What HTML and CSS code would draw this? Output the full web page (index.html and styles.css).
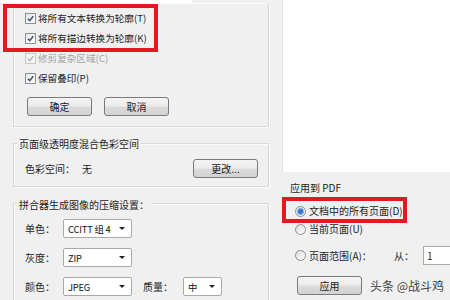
FILE: index.html
```html
<!DOCTYPE html>
<html lang="zh-CN">
<head>
<meta charset="utf-8">
<title>拼合器设置</title>
<link rel="stylesheet" href="styles.css">
</head>
<body>
<div class="screen">
  <div class="left">
    <div class="strip"></div>
    <div class="group g1">
      <div class="cb"><span class="box"><svg viewBox="0 0 10 10"><path d="M2.2 5.2 L4.2 7.4 L8 2.6"/></svg></span>将所有文本转换为轮廓(T)</div>
      <div class="cb"><span class="box"><svg viewBox="0 0 10 10"><path d="M2.2 5.2 L4.2 7.4 L8 2.6"/></svg></span>将所有描边转换为轮廓(K)</div>
      <div class="cb disabled"><span class="box"><svg viewBox="0 0 10 10"><path d="M2.2 5.2 L4.2 7.4 L8 2.6"/></svg></span>修剪复杂区域(C)</div>
      <div class="cb"><span class="box"><svg viewBox="0 0 10 10"><path d="M2.2 5.2 L4.2 7.4 L8 2.6"/></svg></span>保留叠印(P)</div>
      <div class="btns"><span class="btn">确定</span><span class="btn">取消</span></div>
    </div>
    <div class="group g2">
      <div class="gtitle">页面级透明度混合色彩空间</div>
      <div class="row cs">
        <span class="lbl">色彩空间：</span><span class="val">无</span><span class="btn change">更改...</span>
      </div>
    </div>
    <div class="group g3">
      <div class="gtitle">拼合器生成图像的压缩设置：</div>
      <div class="row sel-row"><span class="lbl">单色：</span><span class="select">CCITT 组 4</span></div>
      <div class="row sel-row"><span class="lbl">灰度：</span><span class="select">ZIP</span></div>
      <div class="row sel-row"><span class="lbl">颜色：</span><span class="select">JPEG</span><span class="lbl q">质量：</span><span class="select small">中</span></div>
    </div>
  </div>
  <div class="right">
    <div class="white"></div>
    <div class="apply">
      <div class="atitle">应用到 PDF</div>
      <div class="radio-row r1"><span class="radio on"></span>文档中的所有页面(D)</div>
      <div class="radio-row r2"><span class="radio"></span>当前页面(U)</div>
      <div class="radio-row r3"><span class="radio"></span><span class="range">页面范围(A)：</span><span class="from">从：</span><span class="input">1</span></div>
      <span class="btn applybtn">应用</span>
    </div>
  </div>
  <div class="redbox rb1"></div>
  <div class="redbox rb2"></div>
  <div class="watermark">头条 @战斗鸡</div>
</div>
</body>
</html>
```
FILE: styles.css
```css
html, body {
  margin: 0;
  padding: 0;
}
body {
  width: 450px;
  height: 300px;
  overflow: hidden;
  background: #f0f0f0;
  font-family: "Noto Sans CJK SC", "Noto Sans", sans-serif;
  font-size: 10px;
  line-height: 12px;
  color: #1e1e1e;
}
.screen {
  position: relative;
  width: 450px;
  height: 300px;
  display: flex;
  overflow: hidden;
}
.left {
  width: 282px;
  flex: none;
}
.strip {
  width: 192px;
  height: 3px;
  background: #fff;
}
.group {
  margin-left: 13px;
  width: 256px;
  box-sizing: border-box;
  border: 1px solid #d9d9d9;
  box-shadow: inset 1px 1px 0 #fbfbfb, 1px 1px 0 #fbfbfb;
  padding-left: 11px;
}
.g1 {
  border-top: none;
  padding-top: 5px;
  padding-bottom: 10px;
}
.cb {
  height: 20px;
  display: flex;
  align-items: center;
  font-size: 9.6px;
}
.box {
  width: 9px;
  height: 9px;
  border: 1px solid #8e8f8f;
  background: linear-gradient(135deg, #e6e6e6, #ffffff);
  margin-right: 2px;
  display: flex;
  flex: none;
}
.box svg {
  width: 9px;
  height: 9px;
}
.box path {
  fill: none;
  stroke: #3b4f77;
  stroke-width: 1.7;
}
.cb.disabled {
  color: #a3a3a3;
}
.cb.disabled .box {
  border-color: #c6c6c6;
  background: #f4f4f4;
}
.cb.disabled .box path {
  stroke: #b5b5b5;
}
.btns {
  display: flex;
  gap: 12px;
  margin-top: 9px;
  margin-left: 2px;
}
.btn {
  width: 65px;
  height: 19px;
  box-sizing: border-box;
  border: 1px solid #7a7a7a;
  border-radius: 3px;
  background: linear-gradient(#f4f4f4 0%, #ececec 48%, #dcdcdc 52%, #d2d2d2 100%);
  display: flex;
  align-items: center;
  justify-content: center;
  color: #222;
  flex: none;
}
.g2 {
  margin-top: 16px;
  padding-bottom: 8px;
}
.gtitle {
  display: block;
  width: max-content;
  margin-top: -7px;
  margin-left: -8px;
  padding: 0 2px;
  background: #f0f0f0;
  line-height: 14px;
  height: 14px;
}
.row {
  display: flex;
  align-items: center;
  height: 19px;
}
.cs {
  margin-top: 8px;
}
.cs .lbl {
  width: 57px;
}
.cs .val {
  width: 111px;
}
.g3 {
  margin-top: 16px;
  border-bottom: none;
  padding-bottom: 20px;
}
.g3 .gtitle {
  margin-top: -6px;
}
.sel-row {
  margin-top: 10px;
}
.g3 .gtitle + .sel-row {
  margin-top: 7px;
}
.sel-row .lbl {
  width: 38px;
}
.select {
  position: relative;
  width: 69px;
  height: 19px;
  box-sizing: border-box;
  border: 1px solid #a9a9a9;
  border-radius: 2px;
  background: #fff;
  display: flex;
  align-items: center;
  padding-left: 4px;
  color: #111;
  flex: none;
  font-size: 9.4px;
  letter-spacing: -0.2px;
  white-space: nowrap;
}
.select::after {
  content: "";
  position: absolute;
  right: 6px;
  top: 7px;
  border-left: 3px solid transparent;
  border-right: 3px solid transparent;
  border-top: 3px solid #222;
}
.select.small {
  width: 39px;
}
.lbl.q {
  margin-left: 11px;
  width: 40px;
}
.right {
  width: 168px;
  flex: none;
  display: flex;
  flex-direction: column;
}
.white {
  height: 172px;
  background: #fff;
  box-shadow: inset 1px 0 0 #e4e4e4;
}
.apply {
  padding-left: 8px;
}
.atitle {
  margin-top: 9px;
  line-height: 14px;
  height: 14px;
}
.radio-row {
  display: flex;
  align-items: center;
  height: 18px;
  margin-left: 5px;
}
.r1 {
  margin-top: 7px;
}
.r3 {
  margin-top: 8px;
  height: 19px;
}
.radio {
  width: 9px;
  height: 9px;
  border: 1px solid #8e8f8f;
  border-radius: 50%;
  background: linear-gradient(135deg, #dcdcdc, #ffffff);
  margin-right: 3px;
  flex: none;
}
.radio.on {
  background: radial-gradient(circle, #2f67b8 0, #4d86d4 2.5px, #b9d3f0 3.6px, #f2f2f2 4.2px);
}
.range {
  width: 85px;
  flex: none;
}
.from {
  width: 29px;
  flex: none;
}
.input {
  width: 40px;
  height: 19px;
  box-sizing: border-box;
  border: 1px solid #a9a9a9;
  background: #fff;
  padding-left: 3px;
  display: flex;
  align-items: center;
  flex: none;
}
.applybtn {
  margin-top: 11px;
  margin-left: 7px;
}
.redbox {
  position: absolute;
  border: 4px solid #e2191f;
  box-sizing: border-box;
}
.rb1 {
  left: 3px;
  top: 4px;
  width: 155px;
  height: 48px;
}
.rb2 {
  left: 282px;
  top: 197px;
  width: 125px;
  height: 26px;
}
.watermark {
  position: absolute;
  left: 370px;
  top: 278px;
  font-size: 12px;
  line-height: 16px;
  color: #3c3c3c;
  text-shadow: 0 0 2px #fff;
}
```
